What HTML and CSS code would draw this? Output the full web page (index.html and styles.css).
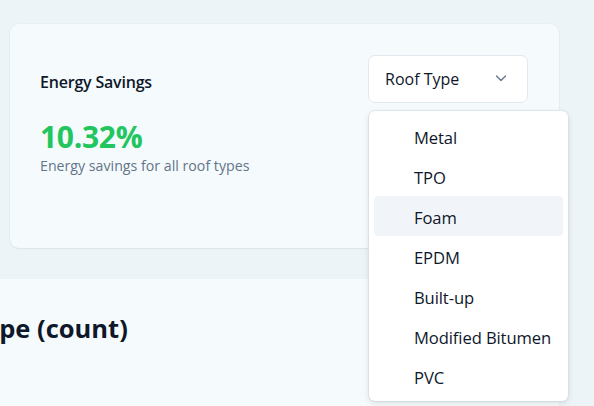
FILE: index.html
```html
<!DOCTYPE html>
<html>
<head>
<meta charset="utf-8">
<link rel="stylesheet" href="styles.css">
</head>
<body>
<div class="page">
  <section class="card">
    <div class="card-head">
      <h2 class="card-title">Energy Savings</h2>
      <div class="select-wrap">
        <button class="select">
          <span>Roof Type</span>
          <svg class="chev" width="16" height="16" viewBox="0 0 16 16" fill="none" stroke="#64748b" stroke-width="1.3" stroke-linecap="round" stroke-linejoin="round"><path d="M3.5 6l4.5 4.5L12.5 6"/></svg>
        </button>
        <ul class="menu">
          <li class="item">Metal</li>
          <li class="item">TPO</li>
          <li class="item active">Foam</li>
          <li class="item">EPDM</li>
          <li class="item">Built-up</li>
          <li class="item">Modified Bitumen</li>
          <li class="item">PVC</li>
        </ul>
      </div>
    </div>
    <div class="value">10.32%</div>
    <div class="sub">Energy savings for all roof types</div>
  </section>
  <section class="panel">
    <h2 class="panel-title">Roof Type (count)</h2>
  </section>
</div>
</body>
</html>
```
FILE: styles.css
```css
* { box-sizing: border-box; }
html, body { margin: 0; padding: 0; }
body {
  background: #edf4f7;
  font-family: "Open Sans", "Noto Sans", sans-serif;
  color: #0f172a;
  overflow: hidden;
  width: 594px;
  height: 406px;
}
.page {
  padding-top: 24px;
  display: flex;
  flex-direction: column;
  gap: 31px;
}
.card {
  margin-left: 10px;
  width: 549px;
  height: 224px;
  background: #f5fbfc;
  border-radius: 9px;
  box-shadow: 0 1px 2px rgba(15, 23, 42, 0.06), 0 0 0 1px rgba(226, 232, 240, 0.35);
  padding: 31px 31px 0 30px;
}
.card-head {
  display: flex;
  justify-content: space-between;
  align-items: flex-start;
}
.card-title {
  margin: 16px 0 0 0;
  font-size: 16px;
  font-weight: 600;
  color: #0f172a;
  letter-spacing: -0.2px;
}
.select-wrap {
  position: relative;
}
.select {
  width: 160px;
  height: 48px;
  background: #fff;
  border: 1px solid #e2e8f0;
  border-radius: 7px;
  display: flex;
  align-items: center;
  justify-content: space-between;
  padding: 0 18px 0 16px;
  font-family: inherit;
  font-size: 16px;
  color: #0f172a;
}
.chev { margin-top: -2px; }
.menu {
  position: absolute;
  left: 1px;
  top: 56px;
  width: 199px;
  margin: 0;
  padding: 5px;
  list-style: none;
  background: #fff;
  border-radius: 6px;
  box-shadow: 0 2px 6px rgba(15, 23, 42, 0.12), 0 0 0 1px rgba(226, 232, 240, 0.8);
}
.item {
  height: 40px;
  display: flex;
  align-items: center;
  padding: 2px 0 0 40px;
  font-size: 16.6px;
  color: #0f172a;
  border-radius: 4px;
  letter-spacing: -0.1px;
}
.item.active { background: #f1f5f9; }
.value {
  margin-top: 16px;
  font-size: 30px;
  font-weight: 700;
  color: #22c55e;
  line-height: 36px;
  letter-spacing: -0.3px;
}
.sub {
  margin-top: 1px;
  font-size: 14.2px;
  color: #64748b;
}
.panel {
  margin-left: -125px;
  width: 684px;
  height: 127px;
  background: #f5fbfc;
  padding: 32px 0 0 30px;
}
.panel-title {
  margin: 0;
  font-size: 25.5px;
  font-weight: 700;
  color: #0f172a;
  white-space: nowrap;
}
```
